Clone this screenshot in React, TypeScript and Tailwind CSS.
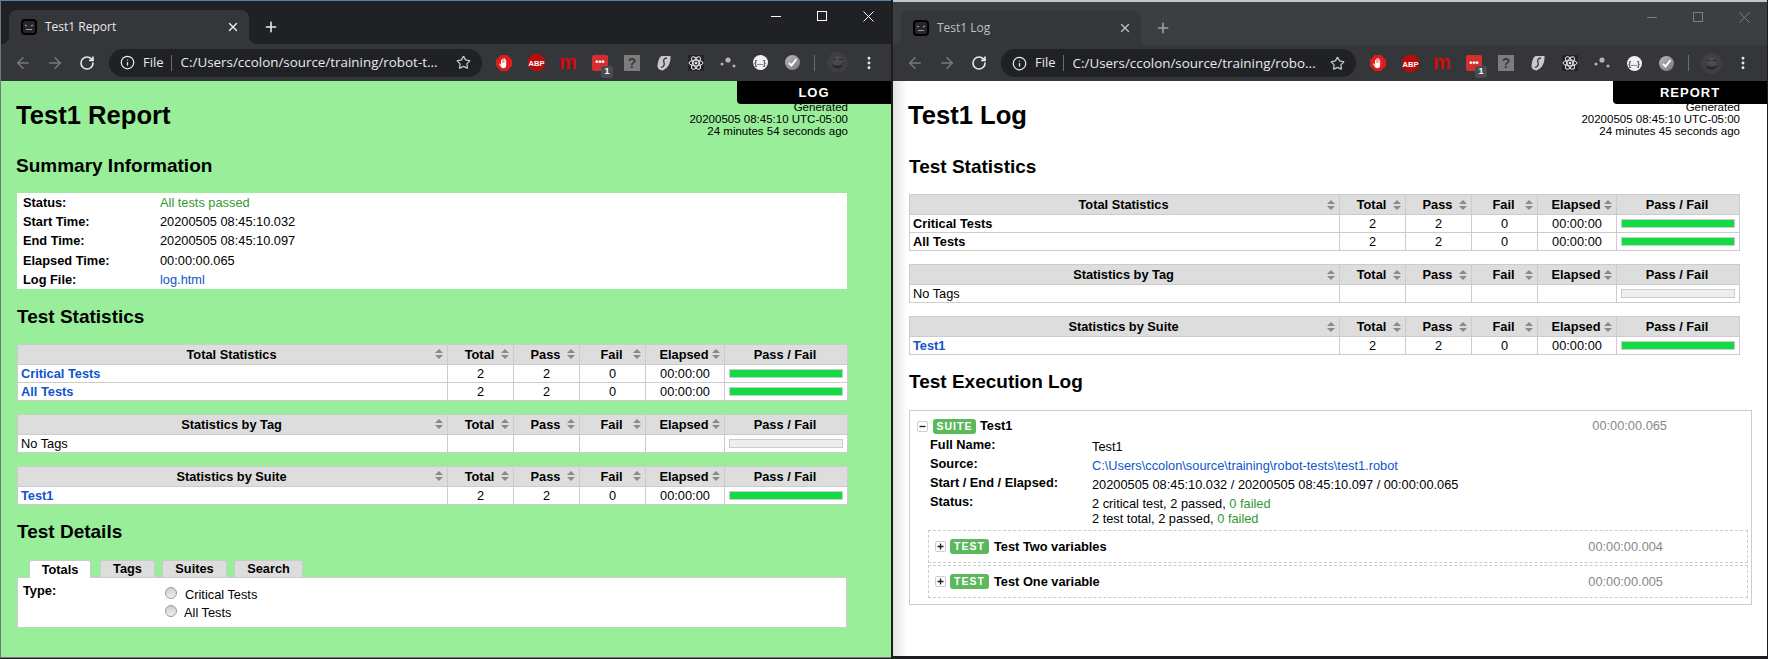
import type { ReactNode } from "react";
import { ArrowLeft, ArrowRight, EllipsisVertical, Info, Plus, RotateCw, Star, X } from "lucide-react";

type StatRow = {
  name: string;
  tone: "link" | "bold" | "plain";
  total?: string;
  pass?: string;
  fail?: string;
  elapsed?: string;
  full?: boolean;
};

const totalRow = { total: "2", pass: "2", fail: "0", elapsed: "00:00:00", full: true };

function Favicon() {
  return (
    <svg width="16" height="16" viewBox="0 0 16 16" className="shrink-0" aria-hidden="true">
      <rect x="1" y="1" width="14" height="14" rx="3" fill="#26272a" stroke="#000" strokeWidth="2" />
      <path d="M4 6l2 1M12 6l-2 1M5 10.5h6" stroke="#9a9a9a" strokeWidth="1.2" fill="none" />
    </svg>
  );
}

function WindowControls({ dim }: { dim: boolean }) {
  const stroke = dim ? "#7b7e81" : "#ffffff";
  return (
    <div className="ml-auto flex">
      <div className="flex h-[30px] w-[46px] items-center justify-center">
        <svg width="10" height="10" viewBox="0 0 10 10" aria-hidden="true"><path d="M0 5.5h10" stroke={stroke} /></svg>
      </div>
      <div className="flex h-[30px] w-[46px] items-center justify-center">
        <svg width="10" height="10" viewBox="0 0 10 10" aria-hidden="true"><rect x="0.5" y="0.5" width="9" height="9" fill="none" stroke={stroke} /></svg>
      </div>
      <div className="flex h-[30px] w-[46px] items-center justify-center">
        <svg width="11" height="11" viewBox="0 0 11 11" aria-hidden="true"><path d="M0.5 0.5l10 10M10.5 0.5l-10 10" stroke={stroke} /></svg>
      </div>
    </div>
  );
}

function ExtSlot({ children }: { children: ReactNode }) {
  return <div className="relative flex h-[32px] w-[32px] items-center justify-center">{children}</div>;
}

function Extensions() {
  return (
    <div className="ml-[6px] flex items-center">
      <ExtSlot>
        <svg width="16" height="16" viewBox="0 0 16 16" aria-hidden="true">
          <polygon points="5,0 11,0 16,5 16,11 11,16 5,16 0,11 0,5" fill="#e01b1b" />
          <path d="M5 8V5.2c0-.7 1-.7 1 0V8h.4V3.8c0-.7 1-.7 1 0V8h.4V3.6c0-.7 1-.7 1 0V8h.4V5c0-.7 1-.7 1 0v5.2c0 2-1.200 3-2.800 3-1.300 0-2-.6-2.600-1.600L3.100 9.300c-.4-.7.400-1.200.9-.6L5 10z" fill="#fff" />
        </svg>
      </ExtSlot>
      <ExtSlot>
        <svg width="17" height="17" viewBox="0 0 17 17" aria-hidden="true">
          <polygon points="5,0 12,0 17,5 17,12 12,17 5,17 0,12 0,5" fill="#b80c0c" />
          <text x="8.5" y="11.500" textAnchor="middle" fontSize="7.500" fontWeight="700" fill="#fff" fontFamily="Liberation Sans">ABP</text>
        </svg>
      </ExtSlot>
      <ExtSlot>
        <span className="-mt-[2px] text-[20px] leading-none font-bold text-[#d40b0b]">m</span>
      </ExtSlot>
      <ExtSlot>
        <div className="flex h-[16px] w-[16px] items-center justify-center rounded-[2px] bg-[#d32f2f] text-[9px] leading-none font-bold text-white">•••</div>
        <span className="absolute left-[17px] top-[19px] flex h-[12px] w-[12px] items-center justify-center rounded-[2px] bg-[#4b4c4f] text-[9px] font-bold text-white">1</span>
      </ExtSlot>
      <ExtSlot>
        <div className="flex h-[16px] w-[16px] items-center justify-center bg-[#7c7c7c] text-[14px] leading-none font-bold text-[#3a3a3a]">?</div>
      </ExtSlot>
      <ExtSlot>
        <svg width="14" height="16" viewBox="0 0 14 16" aria-hidden="true">
          <path d="M5 1h8.500c.4 5-1.500 12-8 14.500C3 15 .5 14 .5 11 .5 8.500 1.500 5 2.500 3 3 2 4 1 5 1z" fill="#c9c9c9" />
          <path d="M10 3C7 3 6 5 7 7.500s-.5 4-3 5" stroke="#35363a" strokeWidth="1.300" fill="none" />
        </svg>
      </ExtSlot>
      <ExtSlot>
        <div className="flex h-[16px] w-[16px] items-center justify-center bg-[#23252a]">
          <svg width="16" height="16" viewBox="0 0 16 16" aria-hidden="true">
            <g fill="none" stroke="#e8e8e8" strokeWidth="1">
              <ellipse cx="8" cy="8" rx="7" ry="2.800" />
              <ellipse cx="8" cy="8" rx="7" ry="2.800" transform="rotate(60 8 8)" />
              <ellipse cx="8" cy="8" rx="7" ry="2.800" transform="rotate(120 8 8)" />
            </g>
            <circle cx="8" cy="8" r="1.300" fill="#e8e8e8" />
          </svg>
        </div>
      </ExtSlot>
      <ExtSlot>
        <svg width="16" height="14" viewBox="0 0 16 14" aria-hidden="true">
          <circle cx="8" cy="4" r="2.600" fill="#b5b5b5" />
          <circle cx="2" cy="8" r="1.500" fill="#b5b5b5" />
          <circle cx="14" cy="10" r="1.500" fill="#b5b5b5" />
        </svg>
      </ExtSlot>
      <ExtSlot>
        <div className="flex h-[15px] w-[15px] items-center justify-center rounded-full bg-[#f1f1f1] text-[7px] leading-none font-bold text-[#333]">{"{...}"}</div>
      </ExtSlot>
      <ExtSlot>
        <div className="flex h-[15px] w-[15px] items-center justify-center rounded-full bg-gradient-to-br from-[#bbbbbb] to-[#777777]">
          <svg width="11" height="11" viewBox="0 0 11 11" aria-hidden="true"><path d="M2 6l2.500 2.500L9.500 2" stroke="#fff" strokeWidth="2" fill="none" /></svg>
        </div>
      </ExtSlot>
      <div className="ml-[6px] h-[16px] w-px bg-[#6b6c6f]" />
      <div className="ml-[6px] flex h-[32px] w-[32px] items-center justify-center">
        <svg width="21" height="21" viewBox="0 0 21 21" aria-hidden="true">
          <circle cx="10.500" cy="10.500" r="10.500" fill="#3e3f42" />
          <circle cx="10.500" cy="9" r="5" fill="#4d4a48" />
          <path d="M5 12c1 6 10 6 11 0-2 2-9 2-11 0z" fill="#28282a" />
          <path d="M6 7.500h3M12 7.500h3" stroke="#232325" strokeWidth="1" />
        </svg>
      </div>
      <div className="flex h-[32px] w-[32px] items-center justify-center">
        <EllipsisVertical size={16} stroke="#e8eaed" strokeWidth={2.4} />
      </div>
    </div>
  );
}

function BrowserChrome({ title, url, dim, omniWidth, stripHeight, toolbarHeight, frame, edge }: {
  title: string;
  url: string;
  dim: boolean;
  omniWidth: string;
  stripHeight: string;
  toolbarHeight: string;
  frame: string;
  edge: string;
}) {
  return (
    <>
      <div className={`flex shrink-0 items-start ${stripHeight} ${frame} ${edge}`}>
        <div className="flex items-center pl-[8px] pt-[9px]">
          <div className="relative flex h-[34px] w-[240px] items-center rounded-t-[8px] bg-[#35363a] pl-[12px] pr-[9px]">
            <span className="absolute -left-[8px] bottom-0 h-[8px] w-[8px] bg-[radial-gradient(circle_at_0_0,transparent_8px,#35363a_8px)]" />
            <span className="absolute -right-[8px] bottom-0 h-[8px] w-[8px] bg-[radial-gradient(circle_at_100%_0,transparent_8px,#35363a_8px)]" />
            <Favicon />
            <span className={`ml-[8px] text-[12px] [font-family:'Open_Sans',sans-serif] ${dim ? "text-[#bdc1c6]" : "text-[#e8eaed]"}`}>{title}</span>
            <X size={14} strokeWidth={2.4} className="ml-auto" stroke={dim ? "#bdc1c6" : "#e8eaed"} />
          </div>
          <div className="ml-[6px] flex h-[32px] w-[32px] items-center justify-center">
            <Plus size={16} strokeWidth={2.4} stroke={dim ? "#9aa0a6" : "#e8eaed"} />
          </div>
        </div>
        <WindowControls dim={dim} />
      </div>
      <div className={`flex shrink-0 items-center bg-[#35363a] pl-[6px] ${toolbarHeight}`}>
        <div className="flex h-[32px] w-[32px] items-center justify-center"><ArrowLeft size={18} stroke="#77787b" strokeWidth={2} /></div>
        <div className="flex h-[32px] w-[32px] items-center justify-center"><ArrowRight size={18} stroke="#77787b" strokeWidth={2} /></div>
        <div className="flex h-[32px] w-[32px] items-center justify-center"><RotateCw size={16} stroke="#e8eaed" strokeWidth={2.4} /></div>
        <div className={`ml-[6px] flex h-[28px] items-center rounded-full bg-[#202124] pl-[11px] pr-[11px] [font-family:'Open_Sans',sans-serif] text-[13.4px] text-[#e8eaed] ${omniWidth}`}>
          <Info size={15} stroke="#e8eaed" strokeWidth={2} className="shrink-0" />
          <span className="ml-[8px] text-[13px]">File</span>
          <span className="ml-[7px] h-[16px] w-px bg-[#6b6c6f]" />
          <span className="ml-[9px] min-w-0 flex-1 truncate whitespace-nowrap">{url}</span>
          <Star size={15} stroke="#c4c6ca" strokeWidth={2} className="ml-[8px] shrink-0" />
        </div>
        <Extensions />
      </div>
    </>
  );
}

function SortArrows() {
  return (
    <svg width="8" height="12" viewBox="0 0 8 12" aria-hidden="true">
      <path d="M4 1l4 4H0zM4 11L0 7h8z" fill="#8a8a8a" />
    </svg>
  );
}

function HeadCell({ label, sortable = true }: { label: string; sortable?: boolean }) {
  return (
    <th className="h-[20px] border border-[#cccccc] bg-[#dddddd] p-0 text-[12.8px] leading-[18px] font-bold">
      <div className="grid grid-cols-[12px_1fr_12px] items-center pr-[2px]">
        <span />
        <span className="flex justify-center whitespace-nowrap pt-px">{label}</span>
        <span className="flex items-center justify-center">{sortable && <SortArrows />}</span>
      </div>
    </th>
  );
}

function StatTable({ title, row, className = "" }: { title: string; row: StatRow[]; className?: string }) {
  return (
    <table className={`w-[830px] table-fixed bg-white text-[12.8px] leading-[16px] ${className}`}>
      <colgroup>
        <col className="w-[430px]" />
        <col className="w-[66px]" />
        <col className="w-[66px]" />
        <col className="w-[66px]" />
        <col className="w-[79px]" />
        <col className="w-[123px]" />
      </colgroup>
      <thead>
        <tr>
          <HeadCell label={title} />
          <HeadCell label="Total" />
          <HeadCell label="Pass" />
          <HeadCell label="Fail" />
          <HeadCell label="Elapsed" />
          <HeadCell label="Pass / Fail" sortable={false} />
        </tr>
      </thead>
      <tbody>
        {row.map((r) => (
          <tr key={r.name}>
            <td className={`h-[18px] border border-[#cccccc] p-0 pl-[3px] pt-px ${r.tone === "link" ? "font-bold text-[#1155cc]" : r.tone === "bold" ? "font-bold" : ""}`}>{r.name}</td>
            <td className="border border-[#cccccc] p-0 pt-px text-center">{r.total}</td>
            <td className="border border-[#cccccc] p-0 pt-px text-center">{r.pass}</td>
            <td className="border border-[#cccccc] p-0 pt-px text-center">{r.fail}</td>
            <td className="border border-[#cccccc] p-0 pt-px text-center">{r.elapsed}</td>
            <td className="border border-[#cccccc] p-0 px-[4px]">
              <div className={`h-[9px] w-[114px] border border-[#cccccc] ${r.full ? "bg-[#12dc44]" : "bg-[#eeeeee]"}`} />
            </td>
          </tr>
        ))}
      </tbody>
    </table>
  );
}

function PageHeader({ title, ago }: { title: string; ago: string }) {
  return (
    <div className="flex h-[54px] w-[832px] items-start justify-between">
      <h1 className="-mt-[1px] text-[25.6px] leading-[30px] font-bold">{title}</h1>
      <div className="text-right text-[11.5px] leading-[12px]">
        <div>Generated</div>
        <div>20200505 08:45:10 UTC-05:00</div>
        <div>{ago}</div>
      </div>
    </div>
  );
}

function Banner({ label }: { label: string }) {
  return (
    <div className="absolute right-0 top-0 flex h-[23px] w-[154px] items-center justify-center rounded-bl-[4px] bg-black text-[13px] leading-none font-bold tracking-[1px] text-white">
      {label}
    </div>
  );
}

function SectionTitle({ children, className = "" }: { children: ReactNode; className?: string }) {
  return <h2 className={`h-[22px] text-[19px] leading-[22px] font-bold ${className}`}>{children}</h2>;
}

function ReportPage() {
  const summary = [
    ["Status:", "All tests passed", "text-[#339933]"],
    ["Start Time:", "20200505 08:45:10.032", ""],
    ["End Time:", "20200505 08:45:10.097", ""],
    ["Elapsed Time:", "00:00:00.065", ""],
    ["Log File:", "log.html", "text-[#1155cc]"],
  ];
  return (
    <div className="relative min-h-0 flex-1 bg-[#99ee99] pl-[15px] pt-[20px] text-[12.8px] text-black">
      <Banner label="LOG" />
      <PageHeader title="Test1 Report" ago="24 minutes 54 seconds ago" />
      <div className="pl-[1px]">
        <SectionTitle className="-ml-[1px]">Summary Information</SectionTitle>
        <table className="mt-[16px] w-[830px] table-fixed bg-white">
          <tbody>
            {summary.map(([label, value, color]) => (
              <tr key={label} className="h-[19.2px]">
                <th className="w-[143px] p-0 pl-[6px] pt-px text-left font-bold leading-[16px]">{label}</th>
                <td className={`p-0 pt-px leading-[16px] ${color}`}>{value}</td>
              </tr>
            ))}
          </tbody>
        </table>
        <SectionTitle className="mt-[17px] mb-[16px]">Test Statistics</SectionTitle>
        <StatTable
          title="Total Statistics"
          row={[
            { name: "Critical Tests", tone: "link", ...totalRow },
            { name: "All Tests", tone: "link", ...totalRow },
          ]}
        />
        <StatTable className="mt-[13px]" title="Statistics by Tag" row={[{ name: "No Tags", tone: "plain" }]} />
        <StatTable className="mt-[13px]" title="Statistics by Suite" row={[{ name: "Test1", tone: "link", ...totalRow }]} />
        <SectionTitle className="mt-[16px]">Test Details</SectionTitle>
        <div className="relative z-10 mt-[17px] flex items-end pl-[12px] text-[12.8px] font-bold">
          <div className="-mb-px flex h-[18px] w-[62px] items-center justify-center rounded-t-[3px] border border-b-0 border-[#cccccc] bg-white">Totals</div>
          <div className="ml-[9px] flex h-[17px] w-[55px] items-center justify-center rounded-t-[3px] border border-b-0 border-[#cccccc] bg-[#dddddd]">Tags</div>
          <div className="ml-[7px] flex h-[17px] w-[65px] items-center justify-center rounded-t-[3px] border border-b-0 border-[#cccccc] bg-[#dddddd]">Suites</div>
          <div className="ml-[7px] flex h-[17px] w-[69px] items-center justify-center rounded-t-[3px] border border-b-0 border-[#cccccc] bg-[#dddddd]">Search</div>
        </div>
        <div className="flex h-[51px] w-[830px] border border-[#cccccc] bg-white">
          <div className="w-[147px] pl-[5px] pt-[5px] leading-[16px] font-bold">Type:</div>
          <div className="pt-[6px]">
            <div className="flex h-[18px] items-center">
              <span className="h-[12px] w-[12px] rounded-full border border-[#9a9a9a] bg-gradient-to-b from-[#cfcfcf] to-[#eeeeee]" />
              <span className="ml-[8px] mt-[3px]">Critical Tests</span>
            </div>
            <div className="flex h-[19px] items-center">
              <span className="h-[12px] w-[12px] rounded-full border border-[#9a9a9a] bg-gradient-to-b from-[#cfcfcf] to-[#eeeeee]" />
              <span className="ml-[7px] mt-[3px]">All Tests</span>
            </div>
          </div>
        </div>
      </div>
    </div>
  );
}

function Badge({ label, width }: { label: string; width: string }) {
  return (
    <span className={`flex h-[15px] items-center justify-center rounded-[3px] bg-[#5cb85c] text-[10.5px] leading-none font-bold tracking-[1px] text-white ${width}`}>
      {label}
    </span>
  );
}

function Toggle({ open }: { open: boolean }) {
  return (
    <span className="flex h-[11px] w-[11px] shrink-0 items-center justify-center rounded-[2px] border border-[#cccccc] bg-white">
      <svg width="7" height="7" viewBox="0 0 7 7" aria-hidden="true">
        <path d={open ? "M0.5 3.5h6" : "M0.5 3.5h6M3.5 0.5v6"} stroke="#222" strokeWidth="1.4" />
      </svg>
    </span>
  );
}

function TestRow({ name, elapsed, className = "" }: { name: string; elapsed: string; className?: string }) {
  return (
    <div className={`ml-[18px] mr-[3px] flex h-[33px] items-center border border-dashed border-[#cccccc] pl-[6px] pr-[84px] ${className}`}>
      <Toggle open={false} />
      <span className="ml-[4px]"><Badge label="TEST" width="w-[39px]" /></span>
      <span className="ml-[5px] font-bold">{name}</span>
      <span className="ml-auto text-[#888888]">{elapsed}</span>
    </div>
  );
}

function LogPage() {
  const meta: [string, ReactNode][] = [
    ["Full Name:", "Test1"],
    ["Source:", <span className="text-[#1155cc]">C:\Users\ccolon\source\training\robot-tests\test1.robot</span>],
    ["Start / End / Elapsed:", "20200505 08:45:10.032 / 20200505 08:45:10.097 / 00:00:00.065"],
    [
      "Status:",
      <div className="leading-[15px]">
        <div>2 critical test, 2 passed, <span className="text-[#339933]">0 failed</span></div>
        <div>2 test total, 2 passed, <span className="text-[#339933]">0 failed</span></div>
      </div>,
    ],
  ];
  return (
    <div className="relative min-h-0 flex-1 bg-[linear-gradient(90deg,#e2e2e2,#ffffff_14px)] pl-[15px] pt-[20px] text-[12.8px] text-black">
      <Banner label="REPORT" />
      <PageHeader title="Test1 Log" ago="24 minutes 45 seconds ago" />
      <div className="pl-[1px]">
        <SectionTitle className="mt-[1px]">Test Statistics</SectionTitle>
        <div className="h-[16px]" />
        <StatTable
          title="Total Statistics"
          row={[
            { name: "Critical Tests", tone: "bold", ...totalRow },
            { name: "All Tests", tone: "bold", ...totalRow },
          ]}
        />
        <StatTable className="mt-[13px]" title="Statistics by Tag" row={[{ name: "No Tags", tone: "plain" }]} />
        <StatTable className="mt-[13px]" title="Statistics by Suite" row={[{ name: "Test1", tone: "link", ...totalRow }]} />
        <SectionTitle className="mt-[16px]">Test Execution Log</SectionTitle>
        <div className="mt-[17px] h-[195px] w-[843px] border border-[#cccccc]">
          <div className="mt-[4px] flex h-[22px] items-center pl-[7px] pr-[84px]">
            <Toggle open />
            <span className="ml-[5px]"><Badge label="SUITE" width="w-[43px]" /></span>
            <span className="ml-[4px] font-bold">Test1</span>
            <span className="ml-auto text-[#888888]">00:00:00.065</span>
          </div>
          <div className="grid grid-cols-[162px_1fr] pl-[20px]">
            {meta.map(([label, value]) => (
              <div key={label} className="contents">
                <div className="h-[19px] leading-[16px] font-bold">{label}</div>
                <div className="mt-[2px] leading-[16px]">{value}</div>
              </div>
            ))}
          </div>
          <TestRow className="mt-[4px]" name="Test Two variables" elapsed="00:00:00.004" />
          <TestRow className="mt-[2px]" name="Test One variable" elapsed="00:00:00.005" />
        </div>
      </div>
    </div>
  );
}

export default function App() {
  return (
    <div className="flex h-[659px] w-[1768px] items-start overflow-hidden bg-[#1d1d1f] [font-family:'Liberation_Sans',Arial,sans-serif]">
      <div className="flex h-[658px] w-[891px] shrink-0 flex-col border-l border-b border-[#777777]">
        <BrowserChrome
          title="Test1 Report"
          url="C:/Users/ccolon/source/training/robot-t..."
          dim={false}
          omniWidth="w-[373px]"
          stripHeight="h-[44px]"
          toolbarHeight="h-[37px]"
          frame="bg-[#202124]"
          edge="border-t border-[#4d86ad]"
        />
        <ReportPage />
      </div>
      <div className="ml-[2px] flex h-[656px] w-[874px] shrink-0 flex-col">
        <BrowserChrome
          title="Test1 Log"
          url="C:/Users/ccolon/source/training/robo..."
          dim
          omniWidth="w-[355px]"
          stripHeight="h-[45px]"
          toolbarHeight="h-[36px]"
          frame="bg-[#3c3f42]"
          edge="border-t-2 border-[#c6c6c6]"
        />
        <LogPage />
      </div>
    </div>
  );
}
